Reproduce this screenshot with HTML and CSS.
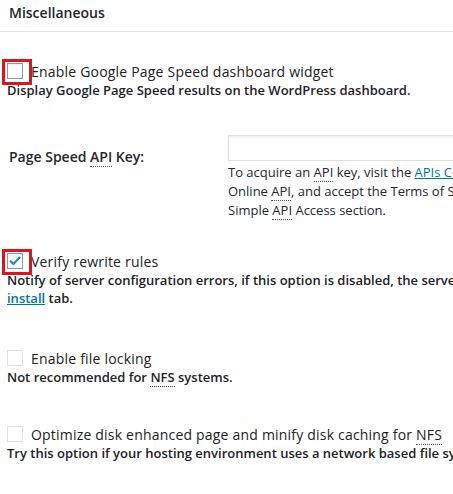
FILE: index.html
```html
<!DOCTYPE html>
<html>
<head>
<meta charset="utf-8">
<link rel="stylesheet" href="styles.css">
</head>
<body>
<div class="panel">
  <h3 class="title">Miscellaneous</h3>
  <div class="content">
    <div class="option first">
      <label class="check-label">
        <span class="cb-wrap">
          <span class="cb cb-dark"></span>
          <span class="highlight"></span>
        </span>
        <span class="label-text">Enable Google Page Speed dashboard widget</span>
      </label>
      <p class="desc">Display Google Page Speed results on the WordPress dashboard.</p>
    </div>

    <div class="field-row">
      <div class="field-label">Page Speed <abbr>API</abbr> Key:</div>
      <div class="field-value">
        <div class="text-input"></div>
        <p class="help">To acquire an <abbr>API</abbr> key, visit the <a href="#">APIs Console</a>. Go to the Services tab, enable the Page Speed<br>Online <abbr>API</abbr>, and accept the Terms of Service. Then go to the <abbr>API</abbr> Access tab. The <abbr>API</abbr> key is in the<br>Simple <abbr>API</abbr> Access section.</p>
      </div>
    </div>

    <div class="option second">
      <label class="check-label">
        <span class="cb-wrap">
          <span class="cb cb-dark">
            <svg class="tick" viewBox="0 0 16 16" width="16" height="16"><path d="M3.6 8.2 L6.4 11 L12.6 4.6" fill="none" stroke="#1e8cbe" stroke-width="2.2" stroke-linecap="round" stroke-linejoin="round"/></svg>
          </span>
          <span class="highlight"></span>
        </span>
        <span class="label-text">Verify rewrite rules</span>
      </label>
      <p class="desc">Notify of server configuration errors, if this option is disabled, the server configuration for active settings can be found on the<br><a href="#">install</a> tab.</p>
    </div>

    <div class="option third">
      <label class="check-label">
        <span class="cb-wrap"><span class="cb cb-light"></span></span>
        <span class="label-text">Enable file locking</span>
      </label>
      <p class="desc">Not recommended for <abbr>NFS</abbr> systems.</p>
    </div>

    <div class="option fourth">
      <label class="check-label">
        <span class="cb-wrap"><span class="cb cb-light"></span></span>
        <span class="label-text">Optimize disk enhanced page and minify disk caching for <abbr>NFS</abbr></span>
      </label>
      <p class="desc">Try this option if your hosting environment uses a network based file system for a possible performance improvement.</p>
    </div>
  </div>
</div>
</body>
</html>
```

FILE: styles.css
```css
html, body {
  margin: 0;
  padding: 0;
  background: #fff;
}
body {
  width: 453px;
  height: 494px;
  overflow: hidden;
  font-family: "Open Sans", "Liberation Sans", sans-serif;
  color: #23282d;
}
.panel {
  width: 453px;
}
.title {
  margin: 0;
  padding: 3px 9px 9px;
  font-size: 14px;
  line-height: 19px;
  font-weight: 600;
  color: #23282d;
  border-bottom: 1px solid #e5e5e5;
}
.content {
  padding: 0 0 0 7px;
  white-space: nowrap;
}
.option {
  display: flex;
  flex-direction: column;
}
.option.first { margin-top: 30px; }
.option.second { margin-top: 32px; }
.option.third { margin-top: 42px; }
.option.fourth { margin-top: 39px; }
.check-label {
  display: flex;
  align-items: center;
  font-size: 14px;
  line-height: 19px;
  letter-spacing: 0.2px;
  color: #222;
}
.cb-wrap {
  position: relative;
  display: inline-flex;
  width: 24px;
  flex: none;
  margin-top: -2px;
}
.cb {
  display: block;
  width: 14px;
  height: 14px;
  border: 1px solid #b4b9be;
  background: #fff;
  box-shadow: inset 0 1px 2px rgba(0,0,0,0.07);
  position: relative;
}
.cb-dark { border-color: #8f9aa8; }
.cb-light { border-color: #e0e0e0; box-shadow: none; }
.tick {
  position: absolute;
  left: -1px;
  top: -1px;
}
.highlight {
  position: absolute;
  left: -5px;
  top: -4px;
  width: 24px;
  height: 20px;
  border: 3px solid #e0141e;
  pointer-events: none;
}
.label-text {
  display: inline-block;
}
.desc {
  margin: 0;
  font-size: 13px;
  line-height: 18px;
  font-weight: 600;
  color: #1d2327;
}
.field-row {
  display: flex;
  margin-top: 36px;
}
.field-label {
  width: 221px;
  flex: none;
  padding: 12px 0 0 2px;
  box-sizing: border-box;
  font-size: 14px;
  line-height: 19px;
  font-weight: 600;
  color: #23282d;
}
.field-value {
  flex: none;
}
.text-input {
  width: 260px;
  height: 24px;
  border: 1px solid #ddd;
  box-shadow: inset 0 1px 2px rgba(0,0,0,0.07);
  background: #fff;
}
.help {
  margin: 2px 0 0;
  font-size: 13px;
  line-height: 19px;
  color: #23282d;
}
abbr {
  text-decoration: none;
  border-bottom: 1px dotted #555;
}
a {
  color: #0073aa;
  text-decoration: underline;
}
```
